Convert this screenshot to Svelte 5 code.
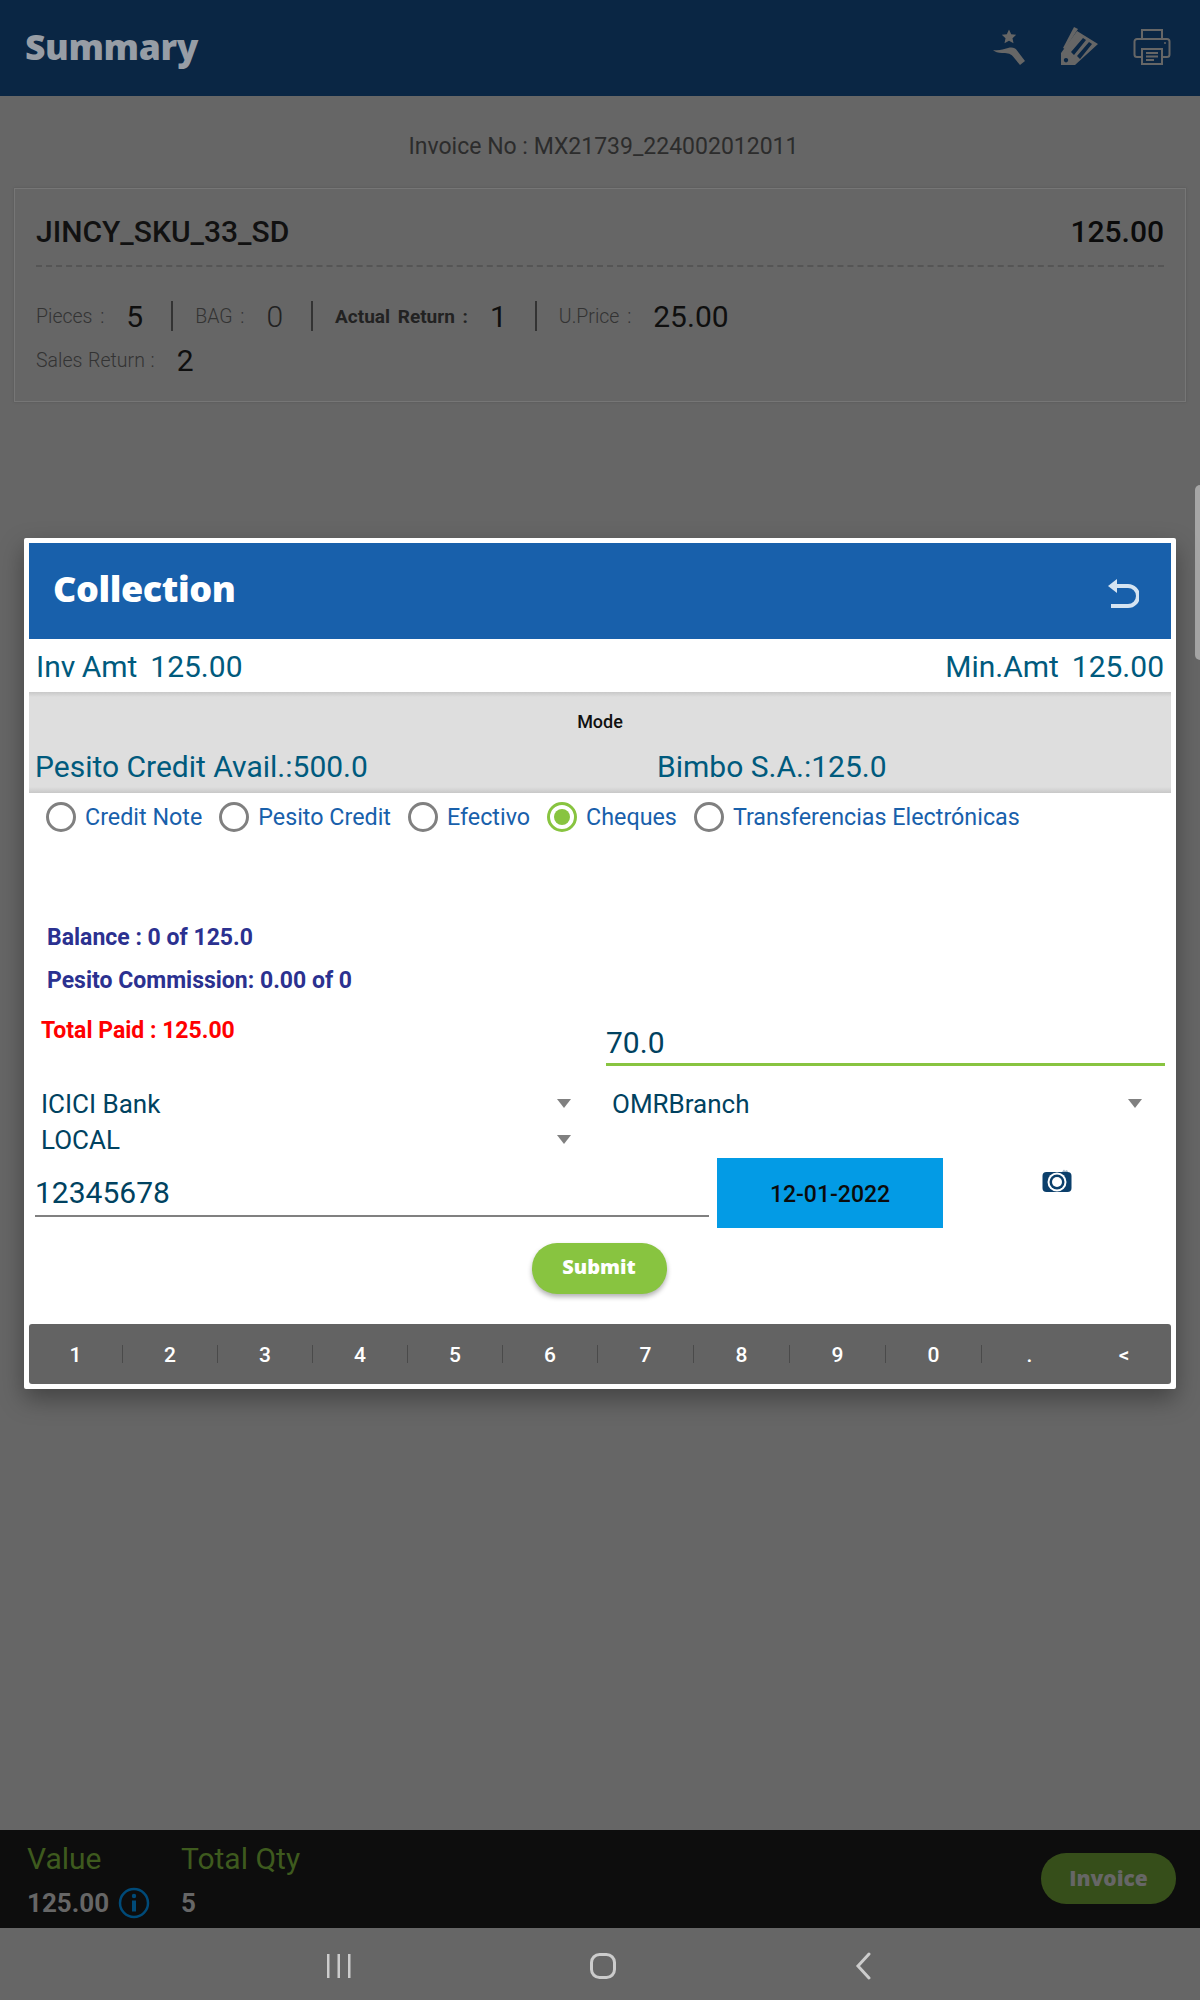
<script lang="ts">
	const stats = [
		{ label: 'Pieces :', value: '5' },
		{ label: 'BAG :', value: '0', light: true },
		{ label: 'Actual Return :', value: '1', strong: true },
		{ label: 'U.Price :', value: '25.00' }
	];
	const modes = [
		{ label: 'Credit Note' },
		{ label: 'Pesito Credit' },
		{ label: 'Efectivo' },
		{ label: 'Cheques', checked: true },
		{ label: 'Transferencias Electrónicas' }
	];
	const keys = ['1', '2', '3', '4', '5', '6', '7', '8', '9', '0', '.', '<'];
</script>

<div class="screen">
	<header class="topbar">
		<h1>Summary</h1>
		<div class="actions">
			<svg width="38" height="42" viewBox="0 0 38 42" fill="#666">
				<path d="M18 3.500l2.200 4.700 5 .6-3.700 3.500 1 5-4.500-2.500-4.500 2.500 1-5-3.700-3.500 5-.6z" />
				<path d="M2 24c6 1 10-.5 15-2 4-1 7-.5 9 2.500l8 10.500-5 4-7-8.500c-3-3.500-7-3.500-11-3.500-4 0-7-1-9-3z" />
			</svg>
			<svg width="42" height="42" viewBox="0 0 42 42" fill="#666">
				<path d="M3 22 14 1l4 2L5 23z" />
				<path fill-rule="evenodd" d="M1 27 17 5l21 13-23 21H1zM11 26l12-14 3 2-12 15zM17 30l12-14 3 2-12 15zM6 32a2.200 2.200 0 1 0 .01 0z" />
			</svg>
			<svg width="38" height="38" viewBox="0 0 38 38" fill="none" stroke="#666" stroke-width="2">
				<path d="M9 11V2h20v9" />
				<path d="M9 29H4a2.500 2.500 0 0 1-2.500-2.500v-13A2.500 2.500 0 0 1 4 11h30a2.500 2.500 0 0 1 2.500 2.500v13A2.500 2.500 0 0 1 34 29h-5" />
				<path d="M9 21h20v15H9z" />
				<path d="M13 25h12M13 28.500h12M13 32h8" />
				<circle cx="32" cy="15" r="1" fill="#666" stroke="none" />
			</svg>
		</div>
	</header>

	<main class="content">
		<p class="invoice-no">Invoice No : MX21739_224002012011</p>
		<section class="card">
			<div class="card-title">
				<span>JINCY_SKU_33_SD</span>
				<b>125.00</b>
			</div>
			<div class="stat-row">
				{#each stats as stat}
					<span class="stat">
						<span class="stat-label" class:strong={stat.strong}>{stat.label}</span>
						<span class="stat-value" class:light={stat.light}>{stat.value}</span>
					</span>
				{/each}
			</div>
			<div class="stat-row second">
				<span class="stat">
					<span class="stat-label">Sales Return :</span>
					<span class="stat-value">2</span>
				</span>
			</div>
		</section>
	</main>

	<footer class="totals">
		<div class="total value-col">
			<span class="total-label">Value</span>
			<span class="total-value">
				125.00
				<svg width="32" height="32" viewBox="0 0 32 32" fill="none">
					<circle cx="16" cy="16" r="14" stroke="#004a78" stroke-width="2.500" />
					<rect x="14" y="13.500" width="4" height="11" fill="#004a78" />
					<circle cx="16" cy="9" r="2.200" fill="#004a78" />
				</svg>
			</span>
		</div>
		<div class="total">
			<span class="total-label">Total Qty</span>
			<span class="total-value">5</span>
		</div>
		<span class="invoice-btn">Invoice</span>
	</footer>

	<nav class="android-nav">
		<svg width="26" height="26" viewBox="0 0 26 26" fill="#ccc">
			<rect x="1" y="1" width="2.500" height="24" />
			<rect x="11.500" y="1" width="2.500" height="24" />
			<rect x="22" y="1" width="2.500" height="24" />
		</svg>
		<svg width="28" height="28" viewBox="0 0 28 28" fill="none" stroke="#ccc" stroke-width="3">
			<rect x="2.500" y="2.500" width="23" height="23" rx="8" />
		</svg>
		<svg width="18" height="28" viewBox="0 0 18 28" fill="none" stroke="#ccc" stroke-width="3" stroke-linecap="round">
			<path d="M15 2 4 14l11 12" />
		</svg>
	</nav>

	<div class="scrollbar"></div>

	<div class="modal">
		<div class="modal-head">
			<h2>Collection</h2>
			<svg width="32" height="30" viewBox="0 0 32 30" fill="none" stroke="#d5e4f2" stroke-width="4">
				<path d="M8 7h13a7.500 7.500 0 0 1 0 20H4" />
				<path d="M1 7 10 0v14z" fill="#d5e4f2" stroke="none" />
			</svg>
		</div>

		<div class="amounts">
			<span>Inv Amt&nbsp; 125.00</span>
			<span>Min.Amt&nbsp; 125.00</span>
		</div>

		<div class="mode-panel">
			<div class="mode-title">Mode</div>
			<div class="mode-credit">
				<span>Pesito Credit Avail.:500.0</span>
				<span>Bimbo S.A.:125.0</span>
			</div>
		</div>

		<div class="radios">
			{#each modes as mode}
				<label class="radio">
					<span class="dot" class:checked={mode.checked}></span>
					{mode.label}
				</label>
			{/each}
		</div>

		<p class="balance">Balance : 0 of 125.0</p>
		<p class="balance commission">Pesito Commission: 0.00 of 0</p>

		<div class="form-grid">
			<div class="left-col">
				<p class="paid">Total Paid : 125.00</p>
				<div class="select">ICICI Bank<i></i></div>
				<div class="select">LOCAL<i></i></div>
			</div>
			<div class="right-col">
				<div class="amount-input">70.0</div>
				<div class="select">OMRBranch<i></i></div>
			</div>
		</div>

		<div class="cheque-row">
			<div class="cheque-input">12345678</div>
			<div class="date-btn">12-01-2022</div>
			<div class="camera">
				<svg width="30" height="24" viewBox="0 0 30 24">
					<path d="M20 3l2-2.500 1 1.500 2-1 1 2z" fill="#9fb3c4" />
					<rect x="0.500" y="3" width="29" height="20" rx="4" fill="#0b3f6b" />
					<circle cx="15" cy="13" r="9.500" fill="#fff" />
					<circle cx="15" cy="13" r="7.500" fill="#0b3f6b" />
					<circle cx="15" cy="13" r="5" fill="#fff" />
				</svg>
			</div>
		</div>

		<div class="submit-row">
			<span class="submit">Submit</span>
		</div>

		<div class="keypad">
			{#each keys as key}
				<span class="key">{key}</span>
			{/each}
		</div>
	</div>
</div>

<style>
	:global(body) {
		margin: 0;
		background: #666;
	}

	.screen {
		position: relative;
		display: flex;
		flex-direction: column;
		width: 1200px;
		height: 2000px;
		overflow: hidden;
		background: #666;
		font-family: Roboto, sans-serif;
	}

	.topbar {
		display: flex;
		align-items: center;
		justify-content: space-between;
		flex: none;
		height: 96px;
		box-sizing: border-box;
		padding: 0 29px 2px 25px;
		background: #0a2644;
	}

	h1 {
		margin: 0;
		color: #979da5;
		font: 800 35.500px/1 'Open Sans', sans-serif;
		letter-spacing: -0.4px;
	}

	.actions {
		display: flex;
		align-items: center;
		gap: 31px;
	}

	.content {
		flex: 1;
	}

	.invoice-no {
		margin: 0;
		padding: 39px 0 0 7px;
		color: #2c2c2c;
		font-size: 23px;
		line-height: 23px;
		text-align: center;
	}

	.card {
		box-sizing: border-box;
		height: 214px;
		margin: 30px 14px 0;
		padding: 25px 21px 0;
		border: 1px solid #767676;
		box-shadow: 0 0 2px #555;
	}

	.card-title {
		display: flex;
		justify-content: space-between;
		height: 51px;
		border-bottom: 2px dashed #555;
		color: #111;
		font-size: 30px;
		font-weight: 500;
		line-height: 36px;
	}

	.card-title b {
		color: #0b0b0b;
		font-weight: 500;
	}

	.stat-row {
		display: flex;
		align-items: center;
		height: 30px;
		margin-top: 34px;
	}

	.stat-row.second {
		margin-top: 14px;
	}

	.stat {
		display: flex;
		align-items: center;
		gap: 22px;
		height: 30px;
		padding-right: 28px;
		margin-right: 22px;
		border-right: 2px solid #333;
	}

	.stat:last-child {
		border-right: 0;
	}

	.stat-label {
		color: #333;
		font-size: 19.500px;
		font-weight: 300;
		word-spacing: 3px;
	}

	.second .stat-label {
		word-spacing: 1px;
	}

	.stat-label.strong {
		color: #222;
		font-size: 19px;
		font-weight: 700;
		word-spacing: 3px;
	}

	.stat-value {
		color: #0f0f0f;
		font-size: 30px;
	}

	.stat-value.light {
		color: #222;
		font-weight: 300;
	}

	.totals {
		display: flex;
		flex: none;
		box-sizing: border-box;
		height: 98px;
		padding: 14px 24px 0 27px;
		background: #0d0d0d;
	}

	.total {
		display: flex;
		flex-direction: column;
		gap: 13px;
	}

	.value-col {
		width: 154px;
	}

	.total-label {
		color: #3e5a1e;
		font-size: 30px;
		line-height: 30px;
	}

	.total-value {
		display: flex;
		align-items: center;
		gap: 9px;
		color: #666;
		font-size: 26px;
		font-weight: 700;
		line-height: 32px;
		white-space: nowrap;
	}

	.total-value svg {
		flex: none;
	}

	.invoice-btn {
		margin: 9px 0 0 auto;
		width: 135px;
		height: 51px;
		border-radius: 25px;
		background: #364e1a;
		color: #666;
		font: 800 21px/50px 'Open Sans', sans-serif;
		text-align: center;
	}

	.android-nav {
		display: flex;
		align-items: center;
		gap: 237px;
		flex: none;
		box-sizing: border-box;
		height: 72px;
		padding: 3px 0 0 326px;
		background: #666;
	}

	.scrollbar {
		position: absolute;
		top: 485px;
		right: 0;
		width: 5px;
		height: 175px;
		border-radius: 5px 0 0 5px;
		background: #a6a6a6;
	}

	.modal {
		position: absolute;
		top: 538px;
		left: 24px;
		display: flex;
		flex-direction: column;
		box-sizing: border-box;
		width: 1152px;
		height: 851px;
		padding: 5px;
		background: #fff;
		border-radius: 2px;
		box-shadow: 0 10px 24px rgba(0, 0, 0, 0.35);
	}

	.modal-head {
		display: flex;
		align-items: center;
		justify-content: space-between;
		flex: none;
		height: 96px;
		padding: 0 32px 0 24px;
		box-sizing: border-box;
		background: #1860ab;
	}

	h2 {
		margin: 0 0 4px;
		color: #fff;
		font: 800 36px/1 'Open Sans', sans-serif;
		letter-spacing: -0.4px;
	}

	.modal-head svg {
		margin-top: 5px;
	}

	.amounts {
		display: flex;
		justify-content: space-between;
		flex: none;
		height: 53px;
		padding: 0 7px;
		color: #005a7d;
		font-size: 30px;
		line-height: 56px;
		word-spacing: -1px;
	}

	.mode-panel {
		flex: none;
		height: 101px;
		background: linear-gradient(#c8c8c8, #dedede 5px, #dedede 95px, #c8c8c8);
	}

	.mode-title {
		padding-top: 19px;
		color: #111;
		font-size: 18px;
		font-weight: 500;
		line-height: 22px;
		text-align: center;
	}

	.mode-credit {
		display: grid;
		grid-template-columns: 622px 1fr;
		margin-top: 18px;
		padding-left: 6px;
		color: #005a7d;
		font-size: 30px;
		line-height: 32px;
	}

	.radios {
		display: flex;
		flex: none;
		height: 50px;
		padding: 9px 0 0 17px;
		box-sizing: border-box;
	}

	.radio {
		display: flex;
		align-items: center;
		gap: 9px;
		height: 30px;
		margin-right: 17px;
		color: #1860ab;
		font-size: 23.300px;
	}

	.dot {
		position: relative;
		box-sizing: border-box;
		width: 30px;
		height: 30px;
		border: 3px solid #808080;
		border-radius: 50%;
	}

	.dot.checked {
		border-color: #88c440;
	}

	.dot.checked::after {
		position: absolute;
		inset: 4px;
		content: '';
		border-radius: 50%;
		background: #88c440;
	}

	.balance {
		margin: 82px 0 0 18px;
		color: #2b3190;
		font-size: 23px;
		font-weight: 700;
		line-height: 26px;
	}

	.commission {
		margin-top: 17px;
	}

	.form-grid {
		display: grid;
		grid-template-columns: 572px 559px;
		margin-top: 20px;
		padding-left: 5px;
	}

	.paid {
		margin: 4px 0 42px 7px;
		color: #f00;
		font-size: 23px;
		font-weight: 700;
		line-height: 26px;
	}

	.amount-input {
		box-sizing: border-box;
		height: 52px;
		padding-top: 11px;
		border-bottom: 3px solid #88c440;
		color: #004260;
		font-size: 30px;
		line-height: 36px;
	}

	.select {
		position: relative;
		height: 36px;
		padding-left: 7px;
		color: #004260;
		font-size: 26px;
		line-height: 36px;
	}

	.right-col .select {
		margin-top: 20px;
		padding-left: 6px;
	}

	.select i {
		position: absolute;
		top: 13px;
		right: 0;
		width: 0;
		height: 0;
		border: 7px solid transparent;
		border-top: 9px solid #808080;
		border-bottom: 0;
	}

	.left-col .select i {
		right: 35px;
	}

	.right-col .select i {
		right: 23px;
	}

	.cheque-row {
		display: flex;
		flex: none;
		height: 70px;
		padding-left: 6px;
	}

	.cheque-input {
		box-sizing: border-box;
		width: 674px;
		height: 59px;
		padding-top: 17px;
		border-bottom: 2px solid #808080;
		color: #004260;
		font-size: 30px;
		line-height: 36px;
	}

	.date-btn {
		width: 226px;
		height: 70px;
		margin-left: 8px;
		background: #039be5;
		color: #0b0b0b;
		font-size: 23px;
		font-weight: 500;
		line-height: 74px;
		text-align: center;
	}

	.camera {
		padding: 11px 0 0 99px;
	}

	.submit-row {
		display: flex;
		justify-content: center;
		margin-top: 15px;
		padding-right: 2px;
	}

	.submit {
		width: 135px;
		height: 51px;
		border-radius: 25px;
		background: #88c440;
		box-shadow: 0 3px 5px rgba(0, 0, 0, 0.3);
		color: #fff;
		font: 800 20px/48px 'Open Sans', sans-serif;
		text-align: center;
	}

	.keypad {
		display: grid;
		grid-template-columns: 94px repeat(5, 95px) repeat(4, 96px) 95px 1fr;
		align-items: center;
		flex: none;
		height: 60px;
		margin-top: 30px;
		border-radius: 3px;
		background: #636363;
	}

	.key {
		height: 18px;
		border-right: 1px solid #4a4a4a;
		color: #fff;
		font-size: 21px;
		font-weight: 500;
		line-height: 20px;
		text-align: center;
	}

	.key:nth-child(n + 11) {
		border-right: 0;
	}
</style>
